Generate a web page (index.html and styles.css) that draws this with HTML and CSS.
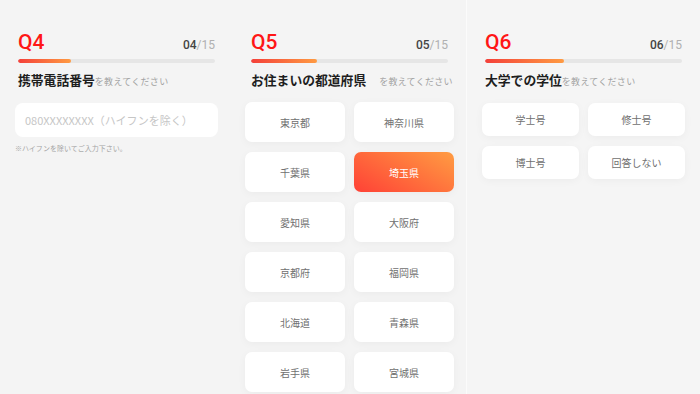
FILE: index.html
```html
<!DOCTYPE html>
<html lang="ja">

<head>
    <meta charset="UTF-8">
    <meta name="viewport" content="width=device-width, initial-scale=1.0">
    <title>Questions</title>
    <link rel="stylesheet" href="styles.css">
</head>

<body>
    <div class="screens">
        <div class="panel">
            <div class="head">
                <span class="q-no">Q4</span>
                <span class="count"><b>04</b>/15</span>
            </div>
            <div class="bar"><div class="fill" style="width: 26.67%"></div></div>
            <div class="title">携帯電話番号<span class="sub">を教えてください</span></div>
            <div class="input">080XXXXXXXX（ハイフンを除く）</div>
            <div class="note">※ハイフンを除いてご入力下さい。</div>
        </div>

        <div class="panel">
            <div class="head">
                <span class="q-no">Q5</span>
                <span class="count"><b>05</b>/15</span>
            </div>
            <div class="bar"><div class="fill" style="width: 33.33%"></div></div>
            <div class="title">お住まいの都道府県<span class="sub sub-far">を教えてください</span></div>
            <div class="choices choices-tall">
                <div class="choice">東京都</div>
                <div class="choice">神奈川県</div>
                <div class="choice">千葉県</div>
                <div class="choice active">埼玉県</div>
                <div class="choice">愛知県</div>
                <div class="choice">大阪府</div>
                <div class="choice">京都府</div>
                <div class="choice">福岡県</div>
                <div class="choice">北海道</div>
                <div class="choice">青森県</div>
                <div class="choice">岩手県</div>
                <div class="choice">宮城県</div>
            </div>
        </div>

        <div class="panel panel-last">
            <div class="head">
                <span class="q-no">Q6</span>
                <span class="count"><b>06</b>/15</span>
            </div>
            <div class="bar"><div class="fill" style="width: 40%"></div></div>
            <div class="title">大学での学位<span class="sub">を教えてください</span></div>
            <div class="choices">
                <div class="choice">学士号</div>
                <div class="choice">修士号</div>
                <div class="choice">博士号</div>
                <div class="choice">回答しない</div>
            </div>
        </div>
    </div>
</body>

</html>
```

FILE: styles.css
```css
html,
body {
    height: 100%;
    margin: 0;
}

body {
    background: #f4f4f4;
    font-family: "Noto Sans CJK JP", "Liberation Sans", sans-serif;
    overflow: hidden;
}

.screens {
    display: flex;
    height: 394px;
}

.panel {
    width: 233px;
    padding: 32px 15px 0;
    box-sizing: border-box;
    flex-shrink: 0;
}

.panel-last {
    width: 234px;
    border-left: 1px solid #fbfbfb;
    background: #f5f5f5;
}

.head {
    display: flex;
    justify-content: space-between;
    align-items: baseline;
    padding: 0 3px;
}

.q-no {
    font-family: Roboto, "Liberation Sans", sans-serif;
    font-weight: 500;
    font-size: 21px;
    line-height: 21px;
    color: #ff1616;
}

.count {
    font-family: Roboto, "Liberation Sans", sans-serif;
    font-size: 12px;
    color: #b0b0b0;
}

.count b {
    font-weight: 500;
    color: #444;
}

.bar {
    height: 4px;
    margin: 6px 3px 0;
    border-radius: 2px;
    background: #e6e6e6;
    overflow: hidden;
}

.fill {
    height: 100%;
    border-radius: 2px;
    background: linear-gradient(90deg, #f4403a, #ff9b42);
}

.title {
    margin: 9px 3px 0;
    font-size: 12.8px;
    line-height: 16px;
    font-weight: 700;
    color: #1e1e1e;
    white-space: nowrap;
}

.sub {
    font-size: 9px;
    font-weight: 400;
    color: #a2a2a2;
    letter-spacing: 0.3px;
}

.sub-far {
    margin-left: 13px;
}

.input {
    margin-top: 13px;
    height: 34px;
    line-height: 34px;
    padding-left: 10px;
    background: #fff;
    border-radius: 8px;
    font-size: 11px;
    color: #c6c6c6;
    white-space: nowrap;
}

.note {
    margin-top: 6px;
    font-size: 7px;
    line-height: 10px;
    color: #a4a4a4;
}

.choices {
    display: grid;
    grid-template-columns: 1fr 1fr;
    grid-auto-rows: 33px;
    gap: 10px 9px;
    margin-top: 13px;
}

.choices-tall {
    grid-auto-rows: 40px;
    margin: 12px -3px 0;
}

.choice {
    display: flex;
    align-items: center;
    justify-content: center;
    background: #fff;
    border-radius: 7px;
    box-shadow: 0 2px 8px rgba(0, 0, 0, 0.04);
    font-size: 10px;
    color: #707070;
}

.choice.active {
    background: linear-gradient(30deg, #ff4136, #ff9c42);
    color: #fff;
}
```
